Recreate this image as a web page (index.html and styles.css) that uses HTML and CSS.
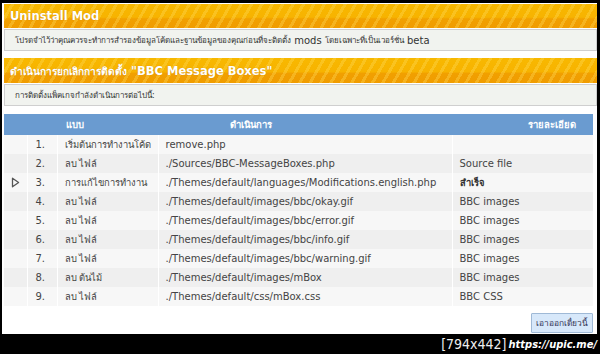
FILE: index.html
```html
<!DOCTYPE html>
<html lang="th">
<head>
<meta charset="utf-8">
<title>Uninstall Mod</title>
<link rel="stylesheet" href="styles.css">
</head>
<body>
<div class="page">
  <div class="cat-bar"><h3>Uninstall Mod</h3></div>
  <div class="info"><span class="th">โปรดจำไว้ว่าคุณควรจะทำการสำรองข้อมูลโค้ดและฐานข้อมูลของคุณก่อนที่จะติดตั้ง</span>&nbsp;mods&nbsp;<span class="th">โดยเฉพาะที่เป็นเวอร์ชั่น</span>&nbsp;beta</div>
  <div class="cat-bar second"><h3><span class="th">ดำเนินการยกเลิกการติดตั้ง</span> "BBC Message Boxes"</h3></div>
  <div class="info"><span class="th">การติดตั้งแพ็คเกจกำลังดำเนินการต่อไปนี้:</span></div>
  <table class="actions">
    <colgroup>
      <col class="c-arrow">
      <col class="c-num">
      <col class="c-type">
      <col class="c-act">
      <col class="c-desc">
    </colgroup>
    <thead>
      <tr>
        <th></th>
        <th></th>
        <th class="h-type">แบบ</th>
        <th class="h-act">ดำเนินการ</th>
        <th class="h-desc">รายละเอียด</th>
      </tr>
    </thead>
    <tbody>
      <tr><td></td><td>1.</td><td class="th">เริ่มต้นการทำงานโค้ด</td><td>remove.php</td><td></td></tr>
      <tr><td></td><td>2.</td><td class="th">ลบ ไฟล์</td><td>./Sources/BBC-MessageBoxes.php</td><td>Source file</td></tr>
      <tr><td class="arrow"><svg width="9" height="11" viewBox="0 0 9 11"><path d="M1.5 1.2 L7.6 5.5 L1.5 9.8 Z" fill="none" stroke="#555" stroke-width="1.3" stroke-linejoin="round"/></svg></td><td>3.</td><td class="th">การแก้ไขการทำงาน</td><td>./Themes/default/languages/Modifications.english.php</td><td class="ok th">สำเร็จ</td></tr>
      <tr><td></td><td>4.</td><td class="th">ลบ ไฟล์</td><td>./Themes/default/images/bbc/okay.gif</td><td>BBC images</td></tr>
      <tr><td></td><td>5.</td><td class="th">ลบ ไฟล์</td><td>./Themes/default/images/bbc/error.gif</td><td>BBC images</td></tr>
      <tr><td></td><td>6.</td><td class="th">ลบ ไฟล์</td><td>./Themes/default/images/bbc/info.gif</td><td>BBC images</td></tr>
      <tr><td></td><td>7.</td><td class="th">ลบ ไฟล์</td><td>./Themes/default/images/bbc/warning.gif</td><td>BBC images</td></tr>
      <tr><td></td><td>8.</td><td class="th">ลบ ต้นไม้</td><td>./Themes/default/images/mBox</td><td>BBC images</td></tr>
      <tr><td></td><td>9.</td><td class="th">ลบ ไฟล์</td><td>./Themes/default/css/mBox.css</td><td>BBC CSS</td></tr>
    </tbody>
  </table>
  <div class="buttons"><button class="btn th">เอาออกเดี๋ยวนี้</button></div>
</div>
<div class="watermark"><span class="dim">[794x442]</span><span class="url">https://upic.me/</span></div>
</body>
</html>
```
FILE: styles.css
```css
html, body {
  margin: 0;
  padding: 0;
  background: #000;
}
body {
  font-family: "DejaVu Sans", Tahoma, "Noto Sans", sans-serif;
  font-size: 10px;
  color: #444;
}
.th {
  font-size: 0.8em;
}
.page {
  margin: 3px 3px 0 2px;
  height: 331px;
  box-sizing: border-box;
  padding: 1px 0 0 2px;
  background: #fff;
}
.cat-bar {
  height: 24px;
  box-sizing: border-box;
  display: flex;
  align-items: center;
  padding-left: 6px;
  background:
    repeating-linear-gradient(120deg, rgba(255,230,120,0) 0 6px, rgba(255,220,90,0.35) 6px 9px),
    linear-gradient(180deg, #f8b800 0%, #f7b300 55%, #f1a000 62%, #f09c00 100%);
}
.cat-bar.second {
  margin-top: 7px;
  height: 25px;
}
.cat-bar h3 {
  margin: 0;
  font-size: 11.5px;
  font-weight: bold;
  color: #fff;
  text-shadow: 0 0 1px rgba(160,90,0,0.5);
}
.cat-bar h3 .th {
  font-size: 0.88em;
}
.info {
  height: 22px;
  box-sizing: border-box;
  margin-top: 1px;
  padding: 0 0 0 10px;
  display: flex;
  align-items: center;
  border: 1px solid #cfcfcf;
  background: #f1f3ef;
  color: #333;
  white-space: nowrap;
}
.actions {
  margin-top: 8px;
  width: 589px;
  border-collapse: collapse;
  table-layout: fixed;
}
.c-arrow { width: 23px; }
.c-num { width: 30px; }
.c-type { width: 101px; }
.c-act { width: 294px; }
.c-desc { width: 141px; }
.actions th {
  height: 21px;
  padding: 0;
  background: #6a9bd0;
  color: #fff;
  font-weight: bold;
  font-size: 9.5px;
  text-align: left;
  white-space: nowrap;
}
.actions th.h-type { padding-left: 9px; }
.actions th.h-act { padding-left: 72px; }
.actions th.h-desc { text-align: right; padding-right: 17px; }
.actions td {
  height: 19px;
  padding: 0 0 0 7px;
  border-left: 1px solid #fff;
  white-space: nowrap;
  overflow: hidden;
}
.actions td.th {
  font-size: 9.4px;
}
.actions td:first-child {
  border-left: none;
  padding: 0;
  text-align: center;
}
.actions td:nth-child(2) { padding-left: 8px; }
.actions tbody tr:nth-child(odd) td { background: #f7f7f7; }
.actions tbody tr:nth-child(even) td { background: #efefef; }
.arrow svg { display: block; margin: 0 auto; }
.ok { font-weight: bold; color: #333; }
.buttons {
  display: flex;
  justify-content: flex-end;
  margin-top: 7px;
  width: 589px;
}
.btn {
  height: 20px;
  padding: 0 4px;
  font-family: inherit;
  font-size: 8.4px;
  color: #335;
  background: #d7e8fa;
  border: 1px solid #9fb9d6;
  border-radius: 1px;
}
.watermark {
  height: 20px;
  display: flex;
  justify-content: flex-end;
  align-items: center;
  padding-right: 3px;
  color: #fff;
  gap: 2px;
}
.dim {
  font-family: "DejaVu Sans Condensed", "DejaVu Sans", sans-serif;
  font-size: 14px;
  color: #eee;
}
.url {
  font-family: "DejaVu Sans Condensed", "DejaVu Sans", sans-serif;
  font-weight: bold;
  font-style: italic;
  font-size: 11px;
  color: #fff;
}
```
